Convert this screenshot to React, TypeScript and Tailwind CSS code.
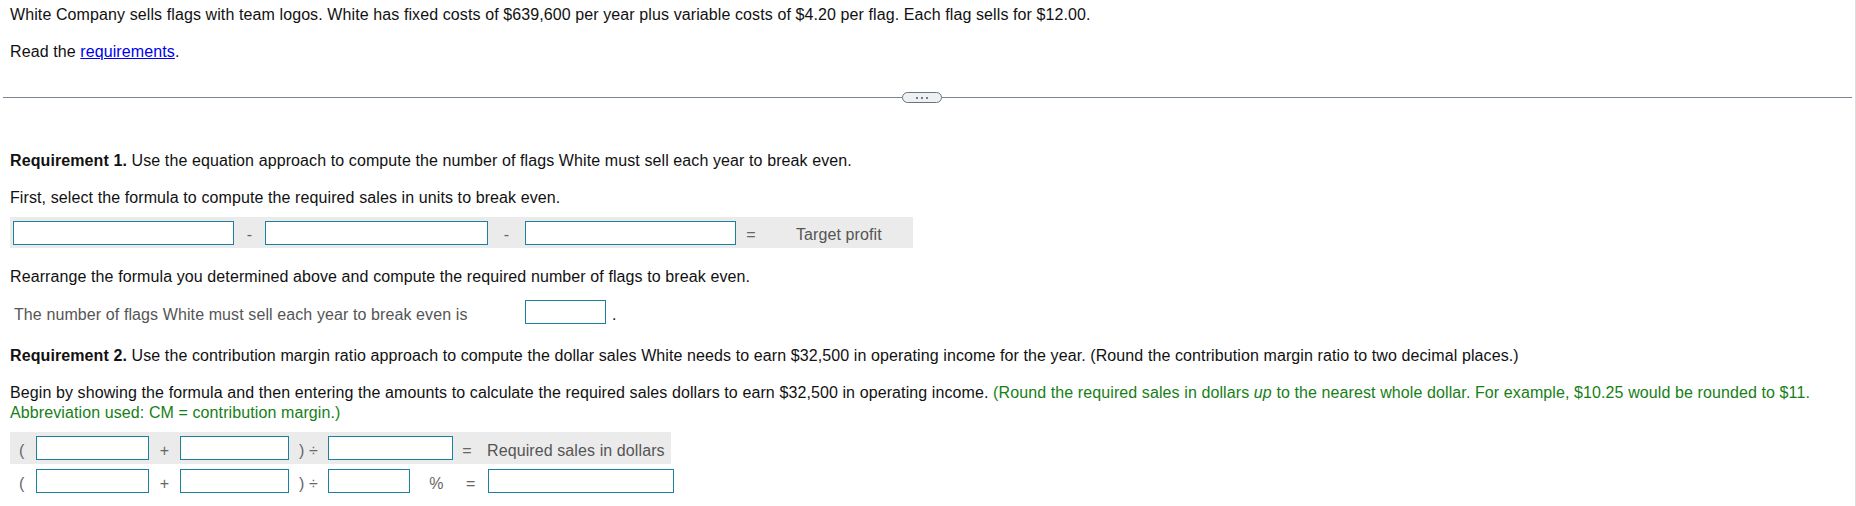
import React from 'react';

const box = 'block h-[24px] border border-[#1b7fa0] bg-white';

function Sep({ children, className = '' }: { children: React.ReactNode; className?: string }) {
  return <span className={`mt-[8px] text-center text-[#666] ${className}`}>{children}</span>;
}

export default function App() {
  return (
    <div className="min-h-[506px] w-full bg-white border-r border-[#dcdcdc] px-[3px] pt-[5px] font-['Liberation_Sans',Arial,sans-serif] text-[16px] leading-[20px] tracking-[0.1px] text-[#111]">
      <div className="pl-[7px]">
        <p>
          White Company sells flags with team logos. White has fixed costs of $639,600 per year plus variable costs of
          $4.20 per flag. Each flag sells for $12.00.
        </p>
        <p className="mt-[17px]">
          Read the <a href="#" className="text-[#0000ee] underline">requirements</a>.
        </p>
      </div>

      {/* collapsible divider */}
      <div className="mt-[30px] flex h-[11px] items-center">
        <div className="h-px w-[899px] bg-[#7d8590]" />
        <button className="flex h-[11px] w-[40px] items-center justify-center gap-[3px] rounded-full border border-[#6b737d] bg-[#eef1f4]">
          <span className="h-[2px] w-[2px] rounded-full bg-[#4b5563]" />
          <span className="h-[2px] w-[2px] rounded-full bg-[#4b5563]" />
          <span className="h-[2px] w-[2px] rounded-full bg-[#4b5563]" />
        </button>
        <div className="h-px flex-1 bg-[#7d8590]" />
      </div>

      <div className="pl-[7px]">
        <p className="mt-[48px]">
          <b>Requirement 1.</b> Use the equation approach to compute the number of flags White must sell each year to
          break even.
        </p>
        <p className="mt-[17px]">First, select the formula to compute the required sales in units to break even.</p>

        <div className="mt-[9px] flex h-[31px] w-[903px] items-start bg-[#ebebeb] pl-[3px]">
          <span className={`${box} mt-[4px] w-[221px]`} />
          <Sep className="w-[31px]">-</Sep>
          <span className={`${box} mt-[4px] w-[223px]`} />
          <Sep className="w-[37px]">-</Sep>
          <span className={`${box} mt-[4px] w-[211px]`} />
          <Sep className="w-[30px]">=</Sep>
          <span className="ml-[30px] mt-[8px] text-[#555]">Target profit</span>
        </div>

        <p className="mt-[19px]">Rearrange the formula you determined above and compute the required number of flags to break even.</p>

        <div className="mt-[13px] flex items-start">
          <span className="mt-[5px] w-[515px] pl-[4px] text-[#555]">
            The number of flags White must sell each year to break even is
          </span>
          <span className={`${box} w-[81px]`} />
          <span className="ml-[6px] mt-[5px]">.</span>
        </div>

        <p className="mt-[21px]">
          <b>Requirement 2.</b> Use the contribution margin ratio approach to compute the dollar sales White needs to earn
          $32,500 in operating income for the year. (Round the contribution margin ratio to two decimal places.)
        </p>
        <p className="mt-[17px]">
          Begin by showing the formula and then entering the amounts to calculate the required sales dollars to earn
          $32,500 in operating income.{' '}
          <span className="text-[#168016]">
            (Round the required sales in dollars <i>up</i> to the nearest whole dollar. For example, $10.25 would be
            rounded to $11.
            <br />
            Abbreviation used: CM = contribution margin.)
          </span>
        </p>

        <div className="mt-[9px] flex h-[32px] w-[661px] items-start bg-[#ebebeb]">
          <span className="mt-[9px] w-[26px] pl-[9px] text-[#666]">(</span>
          <span className={`${box} mt-[4px] w-[113px]`} />
          <span className="mt-[9px] w-[31px] text-center text-[#666]">+</span>
          <span className={`${box} mt-[4px] w-[109px]`} />
          <span className="mt-[9px] w-[39px] text-center text-[#666]">) ÷</span>
          <span className={`${box} mt-[4px] w-[125px]`} />
          <span className="mt-[9px] w-[28px] text-center text-[#666]">=</span>
          <span className="ml-[6px] mt-[9px] text-[#555]">Required sales in dollars</span>
        </div>

        <div className="flex h-[32px] items-start">
          <span className="mt-[10px] w-[26px] pl-[9px] text-[#666]">(</span>
          <span className={`${box} mt-[5px] w-[113px]`} />
          <span className="mt-[10px] w-[31px] text-center text-[#666]">+</span>
          <span className={`${box} mt-[5px] w-[109px]`} />
          <span className="mt-[10px] w-[39px] text-center text-[#666]">) ÷</span>
          <span className={`${box} mt-[5px] w-[82px]`} />
          <span className="mt-[10px] w-[53px] text-center text-[#666]">%</span>
          <span className="mt-[10px] w-[25px] pl-[3px] text-[#666]">=</span>
          <span className={`${box} mt-[5px] w-[186px]`} />
        </div>
      </div>
    </div>
  );
}
